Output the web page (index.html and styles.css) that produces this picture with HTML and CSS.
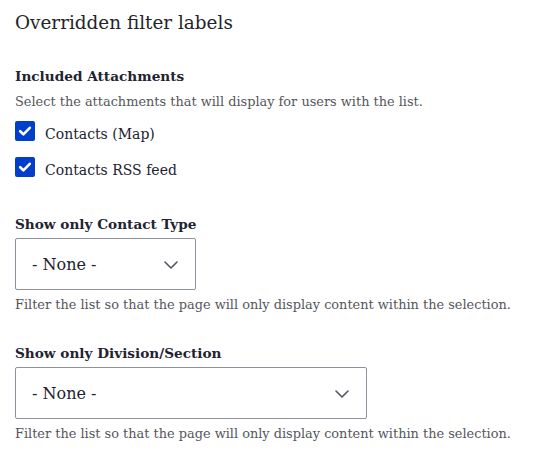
FILE: index.html
```html
<!DOCTYPE html>
<html lang="en">
<head>
<meta charset="utf-8">
<title>Overridden filter labels</title>
<link rel="stylesheet" href="styles.css">
</head>
<body>
<div class="page">
  <h2 class="title">Overridden filter labels</h2>

  <div class="field">
    <div class="label">Included Attachments</div>
    <div class="desc">Select the attachments that will display for users with the list.</div>
    <div class="checks">
      <label class="check-row">
        <span class="box"><svg width="20" height="20" viewBox="0 0 20 20"><path d="M5.2 10.2 L8.4 13.3 L14.8 6.8" fill="none" stroke="#fff" stroke-width="2.6" stroke-linecap="round" stroke-linejoin="round"/></svg></span>
        <span class="check-text">Contacts (Map)</span>
      </label>
      <label class="check-row">
        <span class="box"><svg width="20" height="20" viewBox="0 0 20 20"><path d="M5.2 10.2 L8.4 13.3 L14.8 6.8" fill="none" stroke="#fff" stroke-width="2.6" stroke-linecap="round" stroke-linejoin="round"/></svg></span>
        <span class="check-text">Contacts RSS feed</span>
      </label>
    </div>
  </div>

  <div class="field field-select">
    <div class="label">Show only Contact Type</div>
    <div class="select select-short">
      <span class="select-value">- None -</span>
      <svg class="chev" width="14" height="8" viewBox="0 0 14 8"><path d="M1 1 L7 7 L13 1" fill="none" stroke="#545560" stroke-width="1.6" stroke-linecap="round" stroke-linejoin="round"/></svg>
    </div>
    <div class="help">Filter the list so that the page will only display content within the selection.</div>
  </div>

  <div class="field field-select2">
    <div class="label">Show only Division/Section</div>
    <div class="select select-long">
      <span class="select-value">- None -</span>
      <svg class="chev" width="14" height="8" viewBox="0 0 14 8"><path d="M1 1 L7 7 L13 1" fill="none" stroke="#545560" stroke-width="1.6" stroke-linecap="round" stroke-linejoin="round"/></svg>
    </div>
    <div class="help">Filter the list so that the page will only display content within the selection.</div>
  </div>
</div>
</body>
</html>
```

FILE: styles.css
```css
html, body {
  margin: 0;
  padding: 0;
  background: #ffffff;
}

body {
  font-family: "DejaVu Serif", "Liberation Serif", serif;
  color: #222330;
}

.page {
  padding: 11px 15px 0 15px;
}

.title {
  margin: 0;
  font-size: 18.4px;
  line-height: 24px;
  font-weight: normal;
  color: #232429;
}

.field {
  margin-top: 31px;
}

.field-select {
  margin-top: 30px;
}

.field-select2 {
  margin-top: 29px;
}

.label {
  font-size: 13.65px;
  line-height: 20px;
  font-weight: bold;
  color: #222330;
}

.desc,
.help {
  font-size: 12.9px;
  line-height: 18px;
  color: #55565b;
}

.desc {
  margin-top: 7px;
}

.help {
  margin-top: 6px;
}

.checks {
  margin-top: 9px;
  display: flex;
  flex-direction: column;
  gap: 8px;
}

.check-row {
  display: flex;
  align-items: flex-start;
  gap: 10px;
}

.box {
  margin-top: 1px;
  width: 20px;
  height: 20px;
  border-radius: 2px;
  background: #003ecc;
  display: block;
  flex: none;
}

.box svg {
  display: block;
}

.check-text {
  font-size: 14px;
  line-height: 28px;
  color: #222330;
}

.select {
  margin-top: 4px;
  box-sizing: border-box;
  height: 52px;
  border: 1px solid #8e929c;
  border-radius: 2px;
  padding: 2px 17px 0 16px;
  display: flex;
  align-items: center;
  justify-content: space-between;
  background: #fff;
}

.select-short {
  width: 181px;
}

.select-long {
  width: 352px;
}

.select-value {
  font-size: 16px;
  line-height: 48px;
  color: #222330;
}

.chev {
  display: block;
  flex: none;
  margin-top: -1px;
}
```
